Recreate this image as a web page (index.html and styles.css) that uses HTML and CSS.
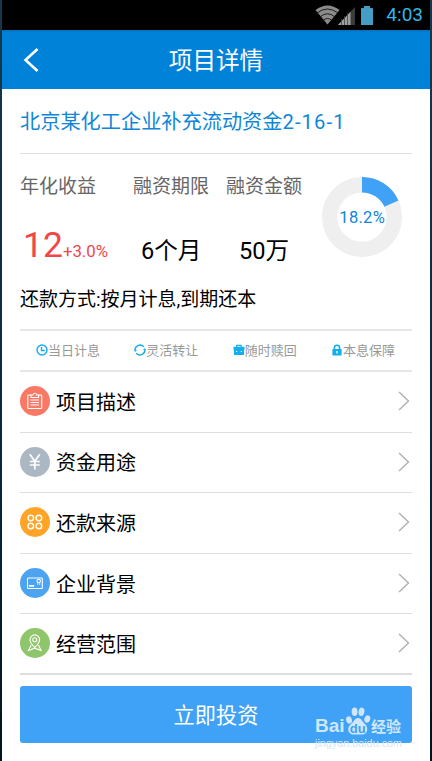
FILE: index.html
```html
<!DOCTYPE html>
<html lang="zh-CN">

<head>
    <meta charset="UTF-8">
    <meta name="viewport" content="width=device-width, initial-scale=1.0">
    <title>项目详情</title>
    <link rel="stylesheet" href="styles.css">
</head>

<body>
    <div class="phone">
        <div class="status-bar">
            <svg class="wifi" width="25" height="20" viewBox="0 0 25 20">
                <path d="M0.5 5 Q12.5 -4 24.5 5 L12.5 19.5 Z" fill="#8b8b8b"/>
                <path d="M2 8 Q12.5 0 23 8 M5 12 Q12.5 5.5 20 12 M8 15.5 Q12.5 11.5 17 15.5" fill="none" stroke="#1c1c1c" stroke-width="1"/>
            </svg>
            <svg class="signal" width="17" height="18" viewBox="0 0 17 18">
                <path d="M0 18 L17 0 V18 Z" fill="#3c3c3c"/>
                <path d="M0 18 L12.5 4.8 V18 Z" fill="#a0a0a0"/>
                <path d="M3.5 12 V18 M6.5 9 V18 M9.5 6 V18" stroke="#444" stroke-width="0.8"/>
            </svg>
            <svg class="battery" width="12" height="19" viewBox="0 0 12 19">
                <path d="M3 0 H9 V2 H11 Q12 2 12 3 V19 H0 V3 Q0 2 1 2 H3 Z" fill="#449dc4"/>
            </svg>
            <span class="clock">4:03</span>
        </div>

        <div class="header">
            <svg class="back" width="16" height="24" viewBox="0 0 16 24">
                <path d="M14.5 1 L2.5 12 L14.5 23" fill="none" stroke="#fff" stroke-width="2.6"/>
            </svg>
            <h1>项目详情</h1>
        </div>

        <div class="content">
            <h2 class="project-name">北京某化工企业补充流动资金<span>2-16-1</span></h2>

            <div class="summary">
                <div class="stats">
                    <div class="stat">
                        <p class="label">年化收益</p>
                        <p class="rate"><b>12</b>+3.0%</p>
                    </div>
                    <div class="stat">
                        <p class="label">融资期限</p>
                        <p class="value">6个月</p>
                    </div>
                    <div class="stat">
                        <p class="label">融资金额</p>
                        <p class="value amount">50万</p>
                    </div>
                    <svg class="donut" width="80" height="80" viewBox="0 0 80 80">
                        <circle cx="40" cy="40" r="32.3" fill="none" stroke="#efefef" stroke-width="15.4"/>
                        <circle cx="40" cy="40" r="32.3" fill="none" stroke="#3fa2f7" stroke-width="15.4" pathLength="100" stroke-dasharray="18.2 81.8" transform="rotate(-90 40 40)"/>
                        <text x="40.2" y="46.3" text-anchor="middle">18.2%</text>
                    </svg>
                </div>
                <p class="repay">还款方式:按月计息,到期还本</p>
            </div>

            <div class="features">
                <div class="feature">
                    <svg width="12" height="12" viewBox="0 0 12 12" fill="none" stroke="#14aeea" stroke-width="1.4">
                        <circle cx="6" cy="6" r="5"/>
                        <path d="M5.5 3 V6.5 H8.8"/>
                    </svg>
                    <span>当日计息</span>
                </div>
                <div class="feature">
                    <svg width="12" height="12" viewBox="0 0 12 12" fill="none" stroke="#14aeea" stroke-width="1.4">
                        <path d="M1.2 7.2 A5 5 0 0 1 9.8 2.8 M10.8 4.8 A5 5 0 0 1 2.2 9.2"/>
                        <path d="M0.2 5.8 L1.3 7.4 L2.8 6.2 M11.8 6.2 L10.7 4.6 L9.2 5.8" stroke-width="0.8"/>
                    </svg>
                    <span>灵活转让</span>
                </div>
                <div class="feature">
                    <svg width="12" height="12" viewBox="0 0 12 12">
                        <path d="M3.8 3 V1.3 H8.2 V3" fill="none" stroke="#14aeea" stroke-width="1.2"/>
                        <path d="M0.5 2.8 H11.5 V6 H0.5 Z M1 6.8 H3 V8 H4.2 V6.8 H7.8 V8 H9 V6.8 H11 V11 H1 Z M1 5.5 H11 V7 H1 Z" fill="#14aeea"/>
                    </svg>
                    <span>随时赎回</span>
                </div>
                <div class="feature">
                    <svg width="12" height="12" viewBox="0 0 12 12">
                        <path d="M3.4 6 V3.8 Q3.4 1.2 6 1.2 Q8.6 1.2 8.6 3.8 V6" fill="none" stroke="#14aeea" stroke-width="1.6"/>
                        <rect x="1.4" y="5" width="9.2" height="6.4" rx="0.6" fill="#14aeea"/>
                        <path d="M6 7 V9.5" stroke="#fff" stroke-width="1.3"/>
                    </svg>
                    <span>本息保障</span>
                </div>
            </div>

            <div class="menu">
                <div class="menu-item">
                    <svg class="icon red" width="30" height="30" viewBox="0 0 30 30">
                        <path d="M11 9 H8.6 Q7.8 9 7.8 9.8 V21.7 Q7.8 22.5 8.6 22.5 H20.9 Q21.7 22.5 21.7 21.7 V9.8 Q21.7 9 20.9 9 H18.5"/>
                        <path d="M11 11.5 V9 H13 Q13.2 7.3 14.8 7.3 Q16.4 7.3 16.6 9 H18.6 V11.5 Z M10.5 14 H19 M10.5 16.5 H19 M10.5 19 H19"/>
                    </svg>
                    <span>项目描述</span>
                    <svg class="arrow" width="12" height="20" viewBox="0 0 12 20"><path d="M1 1 L10.5 10 L1 19"/></svg>
                </div>
                <div class="menu-item">
                    <svg class="icon gray" width="30" height="30" viewBox="0 0 30 30">
                        <path d="M9.8 7.3 L14.8 14.3 L19.8 7.3 M14.8 14.3 V22.5 M9.8 14.5 H19.8 M9.8 18 H19.8" stroke-width="1.7"/>
                    </svg>
                    <span>资金用途</span>
                    <svg class="arrow" width="12" height="20" viewBox="0 0 12 20"><path d="M1 1 L10.5 10 L1 19"/></svg>
                </div>
                <div class="menu-item">
                    <svg class="icon orange" width="30" height="30" viewBox="0 0 30 30">
                        <g stroke-width="1.4">
                            <circle cx="10.8" cy="11" r="2.8"/>
                            <circle cx="18.9" cy="11" r="2.8"/>
                            <circle cx="10.8" cy="19" r="2.8"/>
                            <circle cx="18.9" cy="19" r="2.8"/>
                        </g>
                    </svg>
                    <span>还款来源</span>
                    <svg class="arrow" width="12" height="20" viewBox="0 0 12 20"><path d="M1 1 L10.5 10 L1 19"/></svg>
                </div>
                <div class="menu-item">
                    <svg class="icon blue" width="30" height="30" viewBox="0 0 30 30">
                        <rect x="7.5" y="10" width="14.8" height="10.5" rx="0.8"/>
                        <circle cx="18.7" cy="13" r="1.7"/>
                        <path d="M17.7 14.8 V17 M19.7 14.8 V17" stroke-width="0.7"/>
                        <path d="M9 17.8 H14.2" stroke-width="1.8"/>
                    </svg>
                    <span>企业背景</span>
                    <svg class="arrow" width="12" height="20" viewBox="0 0 12 20"><path d="M1 1 L10.5 10 L1 19"/></svg>
                </div>
                <div class="menu-item">
                    <svg class="icon green" width="30" height="30" viewBox="0 0 30 30">
                        <path d="M14.8 19.5 Q10 14.5 10 11.7 A4.8 4.8 0 0 1 19.6 11.7 Q19.6 14.5 14.8 19.5 Z"/>
                        <circle cx="14.8" cy="11.7" r="2"/>
                        <path d="M11.2 17 L8.5 22.5 L14.8 20.2 L21.1 22.5 L18.4 17"/>
                    </svg>
                    <span>经营范围</span>
                    <svg class="arrow" width="12" height="20" viewBox="0 0 12 20"><path d="M1 1 L10.5 10 L1 19"/></svg>
                </div>
            </div>

            <button class="invest">立即投资</button>
        </div>

        <div class="watermark">
            <div class="brand">
                <span class="bai">Bai</span>
                <svg width="26" height="28" viewBox="0 0 26 28">
                    <ellipse cx="4" cy="13" rx="2.9" ry="3.7" transform="rotate(-15 4 13)"/>
                    <ellipse cx="9.6" cy="4.8" rx="2.9" ry="4.2"/>
                    <ellipse cx="16.5" cy="4.8" rx="2.9" ry="4.2" transform="rotate(10 16.5 4.8)"/>
                    <ellipse cx="22.3" cy="12" rx="2.9" ry="3.7" transform="rotate(20 22.3 12)"/>
                    <path d="M13 11 C16.5 11 17 14.5 20 17 C23.5 20 23 27.5 17.5 27.5 C15 27.5 11 27.5 8.5 27.5 C2.5 27.5 1.5 20.5 6 17 C9 14.8 9.5 11 13 11 Z"/>
                    <text x="12.8" y="25.5" text-anchor="middle">du</text>
                </svg>
                <span class="jingyan">经验</span>
            </div>
            <div class="site">jingyan.baidu.com</div>
        </div>
    </div>
</body>

</html>
```
FILE: styles.css
```css
* {
    box-sizing: border-box;
}

body {
    margin: 0;
    background: linear-gradient(#14394f, #08283c 60%, #02141d);
    font-family: Roboto, "Noto Sans CJK SC", sans-serif;
    color: #000;
}

h1, h2, p {
    margin: 0;
    font-weight: normal;
}

.phone {
    position: relative;
    width: 428px;
    height: 761px;
    margin: 0 auto;
    background: #fff;
    overflow: hidden;
}

.status-bar {
    display: flex;
    align-items: center;
    justify-content: flex-end;
    height: 30px;
    padding-right: 7px;
    background: #000;
}

.signal {
    margin: 1px 6px 0 -2px;
}

.battery {
    margin-right: 13px;
}

.clock {
    color: #33b5e5;
    font-size: 19px;
    line-height: 32px;
}

.header {
    display: flex;
    align-items: center;
    height: 59px;
    padding-left: 21px;
    background: linear-gradient(#0872bd, #0082d8 3px);
}

.header h1 {
    flex: 1;
    padding: 2px 37px 0 0;
    color: #fff;
    font-size: 23.6px;
    line-height: 58px;
    text-align: center;
}

.content {
    padding: 0 18px;
}

.project-name {
    height: 65px;
    border-bottom: 1px solid #dedede;
    color: #0f86d8;
    font-size: 20.2px;
    line-height: 66px;
    white-space: nowrap;
}

.project-name span {
    letter-spacing: 1.1px;
}

.summary {
    height: 177px;
    border-bottom: 2px solid #e6e6e6;
}

.stats {
    display: grid;
    grid-template-columns: 113px 93px 95px 81px;
    height: 125px;
}

.label {
    color: #666;
    font-size: 19px;
    line-height: 28px;
    margin-top: 19px;
}

.rate {
    margin-top: 22px;
    padding-left: 3px;
    color: #f04848;
    font-size: 16.8px;
    line-height: 44px;
    white-space: nowrap;
}

.rate b {
    font-weight: normal;
    font-size: 35.5px;
}

.value {
    margin-top: 35px;
    padding-left: 8px;
    font-size: 23.6px;
    line-height: 30px;
}

.amount {
    padding-left: 13px;
}

.donut {
    margin: 23px 0 0 1px;
}

.donut text {
    fill: #0f86d8;
    font-size: 16.5px;
    letter-spacing: 0.3px;
}

.repay {
    font-size: 19px;
    line-height: 42px;
}

.features {
    display: flex;
    justify-content: space-between;
    align-items: center;
    height: 41px;
    padding: 0 17px 0 16px;
    border-bottom: 2px solid #e6e6e6;
}

.feature {
    display: flex;
    align-items: center;
    color: #999;
    font-size: 13px;
    line-height: 20px;
}

.feature svg {
    margin-top: -2px;
}

.menu-item {
    display: flex;
    align-items: center;
    height: 60.6px;
    padding-right: 2px;
    border-bottom: 1px solid #dedede;
    font-size: 20px;
    line-height: 30px;
}

.menu-item:last-child {
    border-bottom: 2px solid #dedede;
}

.menu-item span {
    flex: 1;
    padding: 2px 0 0 6px;
}

.icon {
    margin-top: -1px;
    border-radius: 50%;
    fill: none;
    stroke: #fff;
    stroke-width: 1.1;
}

.red {
    background: #fa7866;
}

.gray {
    background: #abb7c2;
}

.orange {
    background: #ffa427;
}

.blue {
    background: #4ba3f2;
}

.green {
    background: #8fc56b;
}

.arrow {
    margin-top: -1px;
    fill: none;
    stroke: #b0b0b0;
    stroke-width: 1.4;
}

.invest {
    display: block;
    width: 100%;
    height: 57px;
    margin-top: 11px;
    padding: 3px 0 0;
    border: none;
    border-radius: 3px;
    background: #3fa2f7;
    color: #fff;
    font-family: inherit;
    font-size: 21.2px;
    line-height: 54px;
}

/* site mark lies over the corner of the button */
.watermark {
    position: absolute;
    left: 313px;
    top: 707px;
}

.brand {
    display: flex;
    align-items: flex-end;
    height: 28px;
    color: #cfe6fb;
    font-family: "Liberation Sans", "Noto Sans CJK SC", sans-serif;
    font-weight: bold;
}

.brand svg {
    margin-left: 1px;
    fill: #cfe6fb;
}

.brand text {
    fill: #3fa2f7;
    font-size: 13px;
}

.bai {
    width: 29px;
    font-size: 19px;
    line-height: 18px;
}

.jingyan {
    font-size: 15px;
    line-height: 17px;
}

.site {
    margin-top: 2px;
    color: #d9e5f0;
    font-family: "Liberation Sans", sans-serif;
    font-size: 10.8px;
    line-height: 12px;
}
```
